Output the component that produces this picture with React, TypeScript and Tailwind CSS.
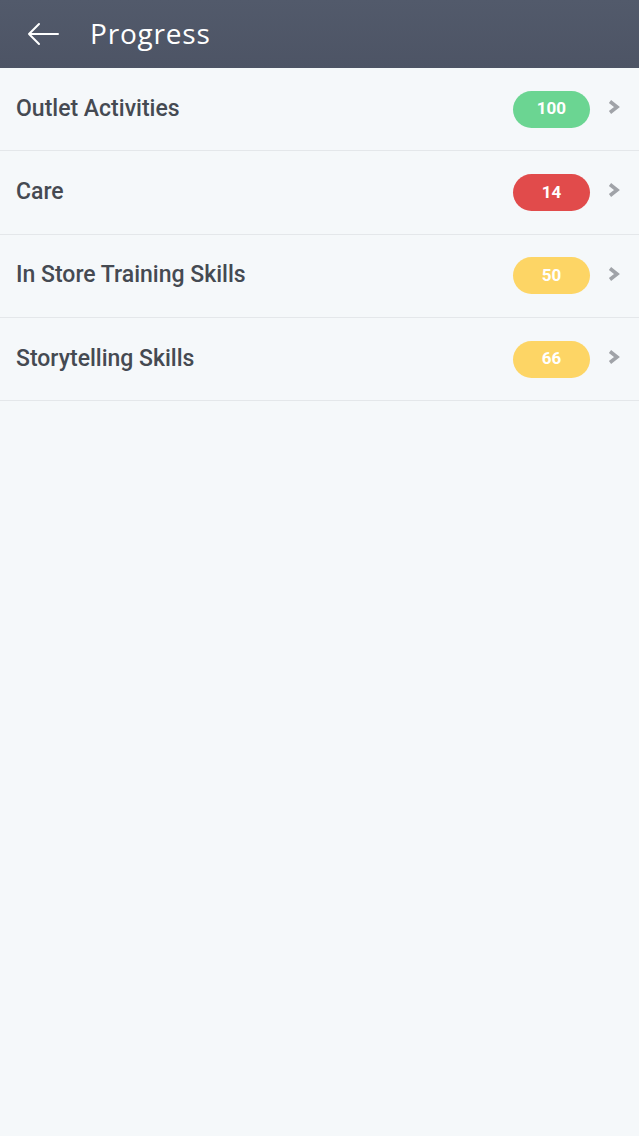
const ITEMS = [
  { name: 'Outlet Activities', score: 100, color: 'bg-[#6bd592]' },
  { name: 'Care', score: 14, color: 'bg-[#e14b4b]' },
  { name: 'In Store Training Skills', score: 50, color: 'bg-[#fdd565]' },
  { name: 'Storytelling Skills', score: 66, color: 'bg-[#fdd565]' },
];

function Chevron() {
  return (
    <svg width="14" height="16" viewBox="0 0 14 16" className="text-[#a0a3a8]">
      <path d="M3 2.5 L10 8 L3 13.5" fill="none" stroke="currentColor" strokeWidth="3.6" strokeLinejoin="miter" />
    </svg>
  );
}

function BackArrow() {
  return (
    <svg width="32" height="24" viewBox="0 0 32 24" className="text-white">
      <path d="M31 12 H2 M12 2 L2 12 L12 22" fill="none" stroke="currentColor" strokeWidth="2" strokeLinecap="round" strokeLinejoin="round" />
    </svg>
  );
}

export default function App() {
  return (
    <div className="min-h-[1136px] w-full bg-[#f5f8fa]" style={{ fontFamily: 'Roboto, "Liberation Sans", sans-serif' }}>
      {/* Header */}
      <div className="h-[68px] bg-gradient-to-b from-[#525a6b] to-[#4d5465] flex items-center pl-[27px]">
        <BackArrow />
        <h1
          className="ml-[31px] -mt-[2px] text-white text-[28px] tracking-[0.8px] font-normal"
          style={{ fontFamily: '"Open Sans", Lato, sans-serif' }}
        >
          Progress
        </h1>
      </div>

      {/* List */}
      <ul>
        {ITEMS.map((item) => (
          <li key={item.name} className="h-[83.3px] flex items-center border-b border-[#e4e7ea] pl-4 pr-[18px]">
            <span className="flex-1 text-[23px] font-medium text-[#454a52]">{item.name}</span>
            <span
              className={`${item.color} w-[77px] h-[37px] rounded-full flex items-center justify-center text-white text-[17px] font-bold`}
            >
              {item.score}
            </span>
            <span className="ml-[17px] -mt-1">
              <Chevron />
            </span>
          </li>
        ))}
      </ul>
    </div>
  );
}
